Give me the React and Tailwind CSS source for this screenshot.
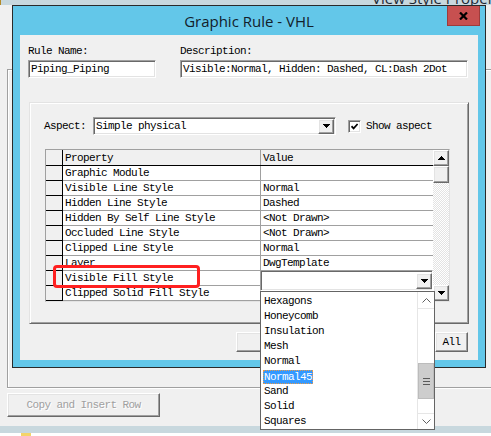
import React from "react";

const mono =
  "font-['Liberation_Mono','DejaVu_Sans_Mono',monospace] text-[11px] tracking-[-0.6px] text-black";
const ui = "font-['Open_Sans','Noto_Sans',sans-serif] tracking-normal";

// classic 3D edges
const sunken =
  "border border-t-[#a0a0a0] border-l-[#a0a0a0] border-b-white border-r-white shadow-[inset_1px_1px_0_#696969,inset_-1px_-1px_0_#e3e3e3]";
const raised =
  "border border-t-white border-l-white border-b-[#696969] border-r-[#696969] shadow-[inset_-1px_-1px_0_#a0a0a0,inset_1px_1px_0_#e3e3e3] bg-[#f0f0f0]";

const rows = [
  ["Graphic Module", ""],
  ["Visible Line Style", "Normal"],
  ["Hidden Line Style", "Dashed"],
  ["Hidden By Self Line Style", "<Not Drawn>"],
  ["Occluded Line Style", "<Not Drawn>"],
  ["Clipped Line Style", "Normal"],
  ["Layer", "DwgTemplate"],
  ["Visible Fill Style", ""],
  ["Clipped Solid Fill Style", ""],
];

const fillStyles = [
  "Hexagons",
  "Honeycomb",
  "Insulation",
  "Mesh",
  "Normal",
  "Normal45",
  "Sand",
  "Solid",
  "Squares",
];

function Tri({ up }) {
  return (
    <svg width="7" height="4" viewBox="0 0 7 4" shapeRendering="crispEdges">
      <path d={up ? "M3.5 0L7 4H0Z" : "M0 0H7L3.5 4Z"} fill="#000" />
    </svg>
  );
}

function Chevron({ up }) {
  return (
    <svg width="9" height="5" viewBox="0 0 9 5">
      <path
        d={up ? "M0.5 4.5L4.5 0.5L8.5 4.5" : "M0.5 0.5L4.5 4.5L8.5 0.5"}
        stroke="#606060"
        fill="none"
      />
    </svg>
  );
}

function DropButton({ className = "" }) {
  return (
    <div className={`flex items-center justify-center ${raised} ${className}`}>
      <Tri />
    </div>
  );
}

function PropertyGrid() {
  return (
    <div className="ml-[1px] mt-[14px] w-[405px] h-[153px] flex bg-white border border-t-[#a0a0a0] border-l-[#a0a0a0] border-r-[#e3e3e3] border-b-[#e3e3e3]">
      <div className="w-[387px] flex flex-col">
        <div className="flex h-[16px] border-b border-black bg-[#f0f0f0]">
          <div className="w-[17px] border-r border-black" />
          <div className="w-[198px] border-r border-[#a0a0a0] pl-[2px] leading-[16px]">
            Property
          </div>
          <div className="flex-1 pl-[2px] leading-[16px]">Value</div>
        </div>
        {rows.map(([prop, value]) => (
          <div key={prop} className="flex h-[15px]">
            <div className="w-[17px] bg-[#f0f0f0] border-r border-b border-black" />
            <div className="w-[198px] border-r border-b border-[#a0a0a0] pl-[2px] leading-[15px] whitespace-nowrap">
              {prop}
            </div>
            <div className="flex-1 border-b border-[#a0a0a0] pl-[2px] leading-[15px] whitespace-nowrap">
              {value}
            </div>
          </div>
        ))}
      </div>
      {/* vertical scrollbar */}
      <div className="w-[16px] flex flex-col">
        <div className={`h-[16px] flex items-center justify-center ${raised}`}>
          <Tri up />
        </div>
        <div className={`h-[17px] ${raised}`} />
        <div className="flex-1 bg-[repeating-conic-gradient(#e3e3e3_0_25%,#ffffff_0_50%)] bg-[length:2px_2px]" />
        <div className={`h-[16px] flex items-center justify-center ${raised}`}>
          <Tri />
        </div>
      </div>
    </div>
  );
}

export default function App() {
  return (
    <div className={`relative w-[491px] h-[436px] overflow-hidden bg-[#f0f0f0] ${mono}`}>
      {/* host window behind the dialog */}
      <div className="flex flex-col h-full">
        <div className="flex items-start h-[5px] bg-[#c8d8de] overflow-hidden">
          <div className="w-[15px] h-[5px] bg-[#f4d46a] border-r border-b border-[#b48a28]" />
          <span className={`ml-[371px] -mt-[9px] text-[15px] leading-[15px] text-[#1c2a36] whitespace-nowrap ${ui}`}>
            View Style Properties
          </span>
        </div>
        <div className="ml-[7px] mt-[64px] h-[319px] border-l border-t border-b border-[#a0a0a0] shadow-[inset_1px_1px_0_#ffffff,0_1px_0_#ffffff]" />
        <div
          className={`ml-[7px] mt-[5px] w-[153px] h-[24px] flex items-center justify-center text-[#a0a0a0] [text-shadow:1px_1px_0_#ffffff] ${raised}`}
        >
          Copy and Insert Row
        </div>
        <div className="mt-[9px] h-[7px] bg-[#c8d8de]" />
        <div className="flex-1 bg-white pl-[21px]">
          <div className="w-[10px] h-[3px] bg-[#f4d46a]" />
        </div>
      </div>

      {/* Graphic Rule dialog */}
      <div className="absolute left-[12px] top-[5px] w-[474px] h-[363px] border border-[#2a2a2a] bg-[#63c7e9] flex flex-col">
        <div className="relative h-[29px] flex items-center justify-center">
          <span className={`text-[15px] leading-[20px] text-[#12202b] ${ui}`}>
            Graphic Rule - VHL
          </span>
          <div className="absolute right-[5px] top-0 w-[33px] h-[20px] bg-[#c75050] border border-t-0 border-[#9e3b3b] flex items-center justify-center">
            <svg width="9" height="8" viewBox="0 0 9 8">
              <path d="M1 0.5L8 7.5M8 0.5L1 7.5" stroke="#000" strokeWidth="2.2" />
            </svg>
          </div>
        </div>

        <div className="mx-[7px] h-[325px] bg-[#f0f0f0] flex flex-col">
          <div className="flex gap-[24px] pl-[8px] pt-[9px]">
            <div className="flex flex-col gap-[4px] w-[128px]">
              <span className="h-[12px] leading-[14px]">Rule Name:</span>
              <div className={`h-[18px] flex items-center bg-white pl-[2px] ${sunken}`}>
                Piping_Piping
              </div>
            </div>
            <div className="flex flex-col gap-[4px] w-[288px]">
              <span className="h-[12px] leading-[14px]">Description:</span>
              <div className={`h-[18px] flex items-center bg-white pl-[2px] whitespace-nowrap ${sunken}`}>
                Visible:Normal, Hidden: Dashed, CL:Dash 2Dot
              </div>
            </div>
          </div>

          <div className="ml-[9px] mt-[24px] w-[440px] h-[222px] flex flex-col pl-[14px] pt-[14px] border border-t-[#e3e3e3] border-l-[#e3e3e3] border-b-[#696969] border-r-[#696969] shadow-[inset_1px_1px_0_#ffffff,inset_-1px_-1px_0_#a0a0a0]">
            <div className="flex items-center h-[18px]">
              <span className="w-[49px]">Aspect:</span>
              <div className={`w-[243px] h-[18px] flex items-center justify-between bg-white pl-[2px] pr-[1px] ${sunken}`}>
                <span>Simple physical</span>
                <DropButton className="w-[16px] h-[15px]" />
              </div>
              <div className={`ml-[12px] w-[13px] h-[13px] flex items-center justify-center bg-white ${sunken}`}>
                <svg width="7" height="7" viewBox="0 0 7 7">
                  <path d="M0.5 3.2L2.6 5.4L6.6 1" stroke="#000" strokeWidth="1.7" fill="none" />
                </svg>
              </div>
              <span className="ml-[5px]">Show aspect</span>
            </div>
            <PropertyGrid />
          </div>

          <div className="flex mt-[8px] h-[20px]">
            <div className={`ml-[216px] w-[80px] ${raised}`} />
            <div className={`ml-[119px] w-[33px] flex items-center justify-center ${raised}`}>
              All
            </div>
          </div>
        </div>
      </div>

      {/* in-place editor for Visible Fill Style */}
      <div className={`absolute left-[260px] top-[270px] w-[173px] h-[21px] flex items-center justify-end bg-white ${sunken}`}>
        <DropButton className="w-[16px] h-[16px]" />
      </div>

      {/* open dropdown list */}
      <div className="absolute left-[260px] top-[291px] w-[175px] h-[139px] flex bg-white border border-[#646464]">
        <div className="flex-1 flex flex-col pt-[2px] pl-[2px]">
          {fillStyles.map((name) => (
            <div key={name} className="h-[15px] flex items-center">
              {name === "Normal45" ? (
                <span className="h-[14px] leading-[12px] bg-[#3399ff] text-white border border-dotted border-[#e89a4a]">
                  {name}
                </span>
              ) : (
                <span className="pl-[1px]">{name}</span>
              )}
            </div>
          ))}
        </div>
        <div className="w-[17px] flex flex-col border-l border-[#e6e6e6] bg-white">
          <div className="h-[17px] flex items-center justify-center border-b border-[#e6e6e6]">
            <Chevron up />
          </div>
          <div className="h-[54px]" />
          <div className="h-[36px] bg-[#cdcdcd] border border-[#bcbcbc] flex flex-col items-center justify-center gap-[2px]">
            <div className="w-[7px] h-[1px] bg-[#5a5a5a]" />
            <div className="w-[7px] h-[1px] bg-[#5a5a5a]" />
            <div className="w-[7px] h-[1px] bg-[#5a5a5a]" />
          </div>
          <div className="flex-1" />
          <div className="h-[16px] flex items-center justify-center border-t border-[#e6e6e6]">
            <Chevron />
          </div>
        </div>
      </div>

      {/* red callout around the Visible Fill Style row */}
      <div className="absolute left-[53px] top-[265px] w-[147px] h-[23px] border-[3px] border-[#ff2020] rounded-[4px]" />
    </div>
  );
}
